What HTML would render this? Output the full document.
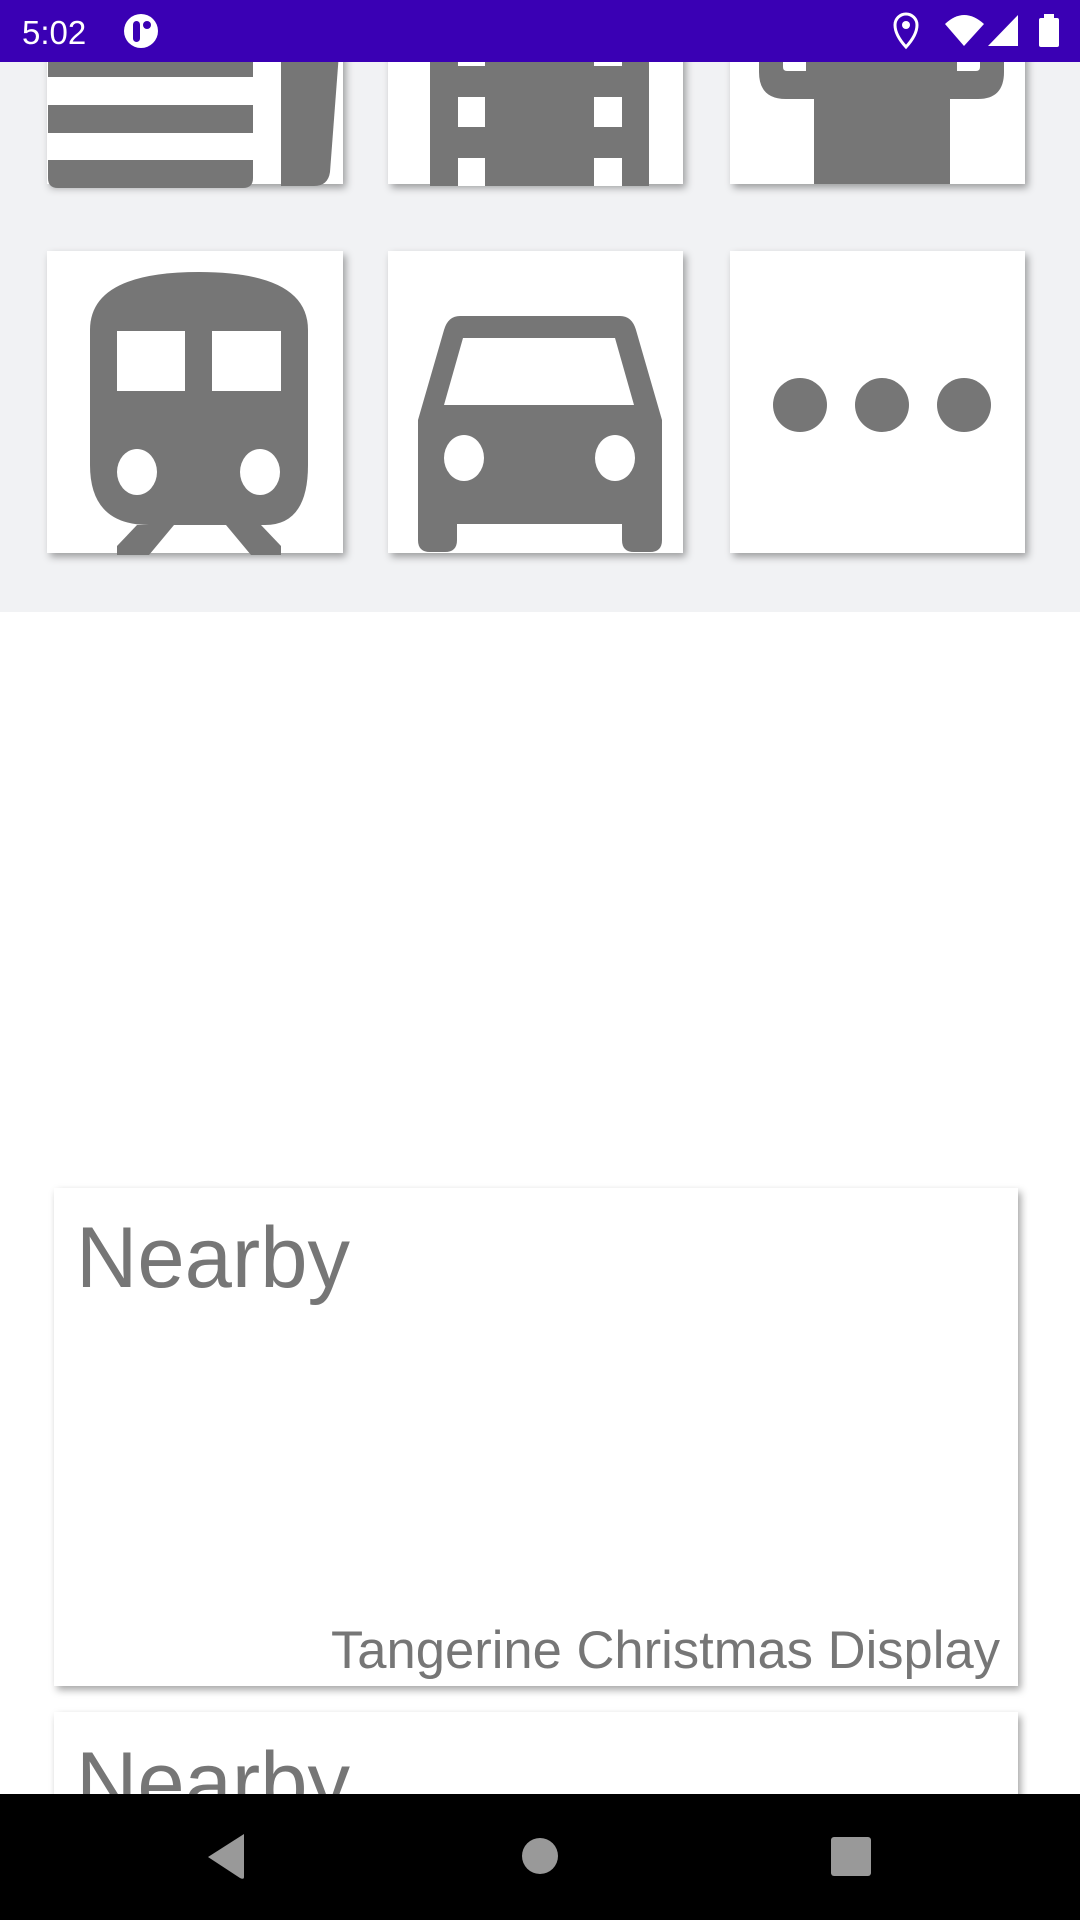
<!DOCTYPE html>
<html><head><meta charset="utf-8"><style>
html,body{margin:0;padding:0;width:1080px;height:1920px;overflow:hidden;background:#fff;}
svg{display:block}
</style></head><body>
<svg width="1080" height="1920" viewBox="0 0 1080 1920" xmlns="http://www.w3.org/2000/svg">
<defs>
<filter id="sh" x="-10%" y="-10%" width="125%" height="125%">
<feDropShadow dx="3" dy="4" stdDeviation="4" flood-color="#000" flood-opacity="0.35"/>
</filter>
</defs>
<rect x="0" y="0" width="1080" height="1920" fill="#fff"/>
<rect x="0" y="62" width="1080" height="550" fill="#f1f2f4"/>

<!-- row1 tiles -->
<g filter="url(#sh)">
<rect x="47" y="40" width="296" height="144" fill="#fff"/>
<rect x="388" y="40" width="295" height="144" fill="#fff"/>
<rect x="730" y="40" width="295" height="144" fill="#fff"/>
</g>
<g fill="#767676">
<rect x="48" y="40" width="205" height="37"/>
<rect x="48" y="105" width="205" height="28"/>
<path d="M48 160H253V178Q253 188 243 188H58Q48 188 48 178Z"/>
<path d="M281 40H340L330 172Q328 186 314 186H281Z"/>
<path d="M430 40H649V186H430Z"/>
<path d="M759 40H1004V72Q1004 99 978 99H950V184H814V99H786Q759 99 759 72Z"/>
</g>
<g fill="#fff">
<rect x="458" y="40" width="27" height="26"/><rect x="594" y="40" width="28" height="26"/>
<rect x="458" y="97" width="27" height="30"/><rect x="594" y="97" width="28" height="30"/>
<rect x="458" y="158" width="27" height="28"/><rect x="594" y="158" width="28" height="28"/>
<path d="M783 40H806V71H787Q783 71 783 67Z"/><path d="M957 40H980V67Q980 71 976 71H957Z"/>
</g>

<!-- row2 tiles -->
<g filter="url(#sh)">
<rect x="47" y="251" width="296" height="302" fill="#fff"/>
<rect x="388" y="251" width="295" height="302" fill="#fff"/>
<rect x="730" y="251" width="295" height="302" fill="#fff"/>
</g>
<!-- train -->
<g fill="#767676">
<path d="M90 330Q90 272 199 272Q308 272 308 330V465Q308 525 265 525H149Q90 525 90 465Z"/>
<path d="M137 525H174L149 555H117V546Z"/>
<path d="M226 525H261L281 546V555H251Z"/>
</g>
<g fill="#fff">
<rect x="117" y="331" width="68" height="60"/><rect x="212" y="331" width="69" height="60"/>
<ellipse cx="137" cy="472" rx="20" ry="23"/><ellipse cx="260" cy="472" rx="20" ry="23"/>
</g>
<!-- car -->
<g fill="#767676">
<path d="M460 316H620Q632 316 636 330L662 420V540Q662 552 650 552H634Q622 552 622 540V524H457V540Q457 552 445 552H430Q418 552 418 540V420L444 330Q448 316 460 316Z"/>
</g>
<g fill="#fff">
<path d="M463 338H615L634 405H444Z"/>
<ellipse cx="464" cy="458" rx="20" ry="23"/><ellipse cx="615" cy="458" rx="20" ry="23"/>
</g>
<!-- dots -->
<g fill="#767676">
<circle cx="800" cy="405" r="27"/><circle cx="882" cy="405" r="27"/><circle cx="964" cy="405" r="27"/>
</g>

<!-- status bar -->
<rect x="0" y="0" width="1080" height="62" fill="#3a00b4"/>
<text x="22" y="44" font-family="Liberation Sans, sans-serif" font-size="33" fill="#fff">5:02</text>
<circle cx="141" cy="31" r="17" fill="#fff"/>
<rect x="133" y="21" width="7" height="21" rx="3.5" fill="#3a00b4"/>
<circle cx="147" cy="25" r="4" fill="#3a00b4"/>
<!-- location -->
<path d="M906 47Q895 35 895 25A11 11 0 0 1 917 25Q917 35 906 47Z" fill="none" stroke="#fff" stroke-width="3"/>
<circle cx="906" cy="25" r="4" fill="#fff"/>
<!-- wifi -->
<path d="M945 24Q964 6 984 24L964 46Z" fill="#fff"/>
<path d="M1018 15V46H988Z" fill="#fff"/>
<rect x="1039" y="18" width="20" height="29" rx="2" fill="#fff"/>
<rect x="1044" y="14" width="10" height="5" fill="#fff"/>

<!-- cards -->
<rect x="54" y="1188" width="964" height="498" fill="#fff" filter="url(#sh)"/>
<rect x="54" y="1712" width="964" height="300" fill="#fff" filter="url(#sh)"/>
<text x="76" y="1287" font-family="Liberation Sans, sans-serif" font-size="86" fill="#767676" textLength="274" lengthAdjust="spacingAndGlyphs">Nearby</text>
<text x="331" y="1668" font-family="Liberation Sans, sans-serif" font-size="53" fill="#767676" textLength="669" lengthAdjust="spacingAndGlyphs">Tangerine Christmas Display</text>
<text x="76" y="1812" font-family="Liberation Sans, sans-serif" font-size="86" fill="#767676" textLength="274" lengthAdjust="spacingAndGlyphs">Nearby</text>

<!-- nav bar -->
<rect x="0" y="1794" width="1080" height="126" fill="#000"/>
<path d="M244 1834V1877Q244 1880 240 1878L208 1857Z" fill="#999"/>
<circle cx="540" cy="1856" r="18" fill="#999"/>
<rect x="831" y="1837" width="40" height="39" rx="3" fill="#999"/>
</svg>
</body></html>
